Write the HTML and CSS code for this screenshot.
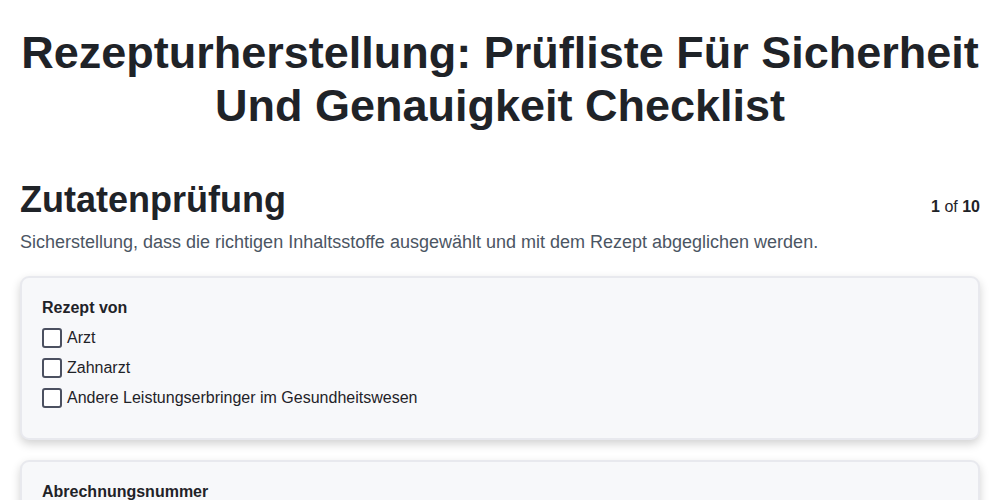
FILE: index.html
```html
<!DOCTYPE html>
<html>
<head>
  <meta charset="utf-8">
  <meta name="viewport" content="width=device-width, initial-scale=1">
  <title>Rezepturherstellung Checklist</title>
  <link rel="stylesheet" href="styles.css">
</head>
<body>
  <div class="page">
    <h1 class="title">Rezepturherstellung: Prüfliste Für Sicherheit Und Genauigkeit Checklist</h1>

    <div class="section-head">
      <h2>Zutatenprüfung</h2>
      <span class="counter"><strong>1</strong> of <strong>10</strong></span>
    </div>
    <p class="desc">Sicherstellung, dass die richtigen Inhaltsstoffe ausgewählt und mit dem Rezept abgeglichen werden.</p>

    <div class="card">
      <h4>Rezept von</h4>
      <label class="option"><span class="box"></span>Arzt</label>
      <label class="option"><span class="box"></span>Zahnarzt</label>
      <label class="option"><span class="box"></span>Andere Leistungserbringer im Gesundheitswesen</label>
    </div>

    <div class="card">
      <h4>Abrechnungsnummer</h4>
      <label class="option"><span class="box"></span>Vorhanden</label>
    </div>
  </div>
</body>
</html>
```

FILE: styles.css
```css
body {
  margin: 0;
  font-family: "Liberation Sans", Arial, sans-serif;
  background: #fff;
  color: #1f2328;
}

.page {
  padding: 0 20px 40px 20px;
}

.title {
  margin: 0;
  padding-top: 26px;
  font-size: 45px;
  line-height: 53px;
  font-weight: bold;
  text-align: center;
  color: #1f2328;
}

.section-head {
  display: flex;
  justify-content: space-between;
  align-items: baseline;
  margin-top: 46px;
}

.section-head h2 {
  margin: 0;
  font-size: 36px;
  line-height: 44px;
  font-weight: bold;
}

.counter {
  font-size: 16px;
  color: #1f2328;
}

.desc {
  margin: 10px 0 23px 0;
  font-size: 18px;
  line-height: 21px;
  color: #4b5563;
}

.card {
  background: #f7f8fa;
  border: 2px solid #e8e9ee;
  border-radius: 9px;
  box-shadow: 0 4px 10px rgba(0,0,0,0.18);
  padding: 20px 20px 25px 20px;
  margin-bottom: 20px;
}

.card h4 {
  margin: 0 0 5px 0;
  font-size: 16px;
  line-height: 20px;
  font-weight: bold;
}

.option {
  display: flex;
  align-items: center;
  gap: 5px;
  height: 30px;
  font-size: 16px;
}

.box {
  width: 16px;
  height: 16px;
  border: 2px solid #4b5060;
  border-radius: 3px;
  background: #fff;
}
```
